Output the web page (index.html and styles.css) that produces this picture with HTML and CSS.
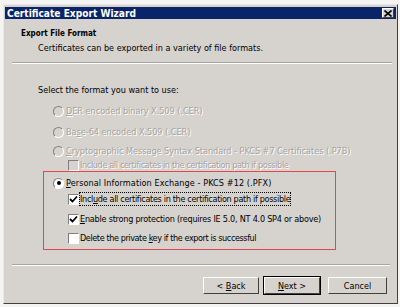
FILE: index.html
```html
<!DOCTYPE html>
<html>
<head>
<meta charset="utf-8">
<link rel="stylesheet" href="styles.css">
</head>
<body>
<div class="window">
  <div class="titlebar">
    <span class="title">Certificate Export Wizard</span>
    <span class="close">
      <svg width="8" height="7" viewBox="0 0 8 7"><path d="M0.5 0.5 L7.5 6.5 M7.5 0.5 L0.5 6.5" stroke="#000" stroke-width="1.6"/></svg>
    </span>
  </div>
  <div class="header">
    <div class="heading">Export File Format</div>
    <div class="subheading">Certificates can be exported in a variety of file formats.</div>
  </div>
  <div class="sep sep-top"></div>
  <div class="content">
    <div class="prompt">Select the format you want to use:</div>
    <div class="row radio-row disabled r1"><span class="radio"></span><span class="label"><u>D</u>ER encoded binary X.509 (.CER)</span></div>
    <div class="row radio-row disabled r2"><span class="radio"></span><span class="label">Ba<u>s</u>e-64 encoded X.509 (.CER)</span></div>
    <div class="row radio-row disabled r3"><span class="radio"></span><span class="label"><u>C</u>ryptographic Message Syntax Standard - PKCS #7 Certificates (.P7B)</span></div>
    <div class="row check-row disabled r4"><span class="check"></span><span class="label">Include all certificates in the certification path if possible</span></div>
    <div class="highlight">
      <div class="row radio-row r5"><span class="radio checked"><span class="dot"></span></span><span class="label"><u>P</u>ersonal Information Exchange - PKCS #12 (.PFX)</span></div>
      <div class="row check-row r6"><span class="check checked"><svg width="9" height="9" viewBox="0 0 9 9"><path d="M1 4 L3.5 6.5 L8 1.5" fill="none" stroke="#000" stroke-width="1.8"/></svg></span><span class="label focus">Incl<u>u</u>de all certificates in the certification path if possible</span></div>
      <div class="row check-row r7"><span class="check checked"><svg width="9" height="9" viewBox="0 0 9 9"><path d="M1 4 L3.5 6.5 L8 1.5" fill="none" stroke="#000" stroke-width="1.8"/></svg></span><span class="label"><u>E</u>nable strong protection (requires IE 5.0, NT 4.0 SP4 or above)</span></div>
      <div class="row check-row r8"><span class="check"></span><span class="label">Delete the private <u>k</u>ey if the export is successful</span></div>
    </div>
  </div>
  <div class="sep sep-bottom"></div>
  <div class="footer">
    <button class="btn">&lt; <u>B</u>ack</button>
    <button class="btn default"><u>N</u>ext &gt;</button>
    <button class="btn cancel">Cancel</button>
  </div>
</div>
</body>
</html>
```

FILE: styles.css
```css
html, body {
  margin: 0;
  padding: 0;
  background: #f4f4f2;
}
body {
  font-family: "DejaVu Sans Condensed", "Liberation Sans", Arial, sans-serif;
  font-size: 9px;
  color: #000;
}
.window {
  box-sizing: border-box;
  width: 395px;
  height: 300px;
  margin: 4px 0 0 3px;
  background: #d6d3ce;
  border: 1px solid;
  border-color: #ece9e4 #404040 #404040 #ece9e4;
  padding: 2px 1px 1px 1px;
  display: flex;
  flex-direction: column;
}
.titlebar {
  height: 12px;
  background: #0a246a;
  display: flex;
  align-items: center;
  justify-content: space-between;
  padding: 0 2px 0 2px;
}
.title {
  color: #fff;
  font-weight: bold;
  font-size: 10.1px;
}
.close {
  width: 12px;
  height: 10px;
  background: #d6d3ce;
  border: 1px solid;
  border-color: #fff #404040 #404040 #fff;
  box-sizing: border-box;
  display: flex;
  align-items: center;
  justify-content: center;
}
.header {
  padding: 9px 0 0 16px;
  line-height: 12px;
}
.heading {
  font-weight: bold;
  font-size: 8px;
}
.subheading {
  margin: 2px 0 0 17px;
}
.sep {
  height: 0;
  border-top: 1px solid #a8a5a0;
  border-bottom: 1px solid #fff;
}
.sep-top {
  margin: 8px 4px 0 7px;
}
.content {
  flex: 1;
  padding: 0 0 0 33px;
  line-height: 12px;
}
.prompt {
  margin-top: 20px;
}
.row {
  display: flex;
  align-items: center;
  height: 12px;
  white-space: nowrap;
}
.radio-row { padding-left: 15px; }
.check-row { padding-left: 30px; }
.r1 { margin-top: 9px; }
.r2 { margin-top: 9px; }
.r3 { margin-top: 7px; }
.r4 { margin-top: 2px; }
.r4 .label { letter-spacing: -0.35px; }
.r5 .label { letter-spacing: 0.1px; }
.r6 .label { letter-spacing: -0.32px; }
.r7 .label { letter-spacing: -0.22px; }
.r8 .label { letter-spacing: -0.4px; }
.radio {
  box-sizing: border-box;
  width: 11px;
  height: 11px;
  border-radius: 50%;
  border: 1px solid;
  border-color: #808080 #fff #fff #808080;
  background: #fff;
  margin-right: 2px;
  display: flex;
  align-items: center;
  justify-content: center;
}
.check {
  box-sizing: border-box;
  width: 11px;
  height: 11px;
  border: 1px solid;
  border-color: #808080 #fff #fff #808080;
  background: #fff;
  margin-right: 1px;
  display: flex;
  align-items: center;
  justify-content: center;
}
.disabled .radio, .disabled .check {
  background: #d6d3ce;
}
.disabled .label {
  color: #a6a39e;
  text-shadow: 1px 1px 0 #fff;
}
.dot {
  width: 4px;
  height: 4px;
  border-radius: 50%;
  background: #000;
}
.highlight {
  margin: 0 0 0 5px;
  width: 293px;
  height: 79px;
  box-sizing: border-box;
  border: 1px solid #e0484c;
  padding-top: 5px;
}
.highlight .radio-row { padding-left: 9px; }
.highlight .check-row { padding-left: 24px; }
.r6 { margin-top: 4px; }
.r7 { margin-top: 8px; }
.r8 { margin-top: 7px; }
.focus {
  outline: 1px dotted #000;
  outline-offset: 0;
}
.sep-bottom {
  margin: 0 6px 0 7px;
}
.footer {
  height: 36px;
  display: flex;
  align-items: flex-start;
  padding: 11px 0 0 198px;
  box-sizing: border-box;
}
.btn {
  width: 56px;
  height: 17px;
  font-family: inherit;
  font-size: 9px;
  background: #d6d3ce;
  border: 1px solid;
  border-color: #fff #404040 #404040 #fff;
  padding: 0;
  margin-right: 4px;
}
.btn.default {
  outline: 1px solid #000;
  outline-offset: 0;
  margin-left: 1px;
  width: 56px;
}
.btn.cancel {
  margin-left: 4px;
  width: 59px;
}
```
